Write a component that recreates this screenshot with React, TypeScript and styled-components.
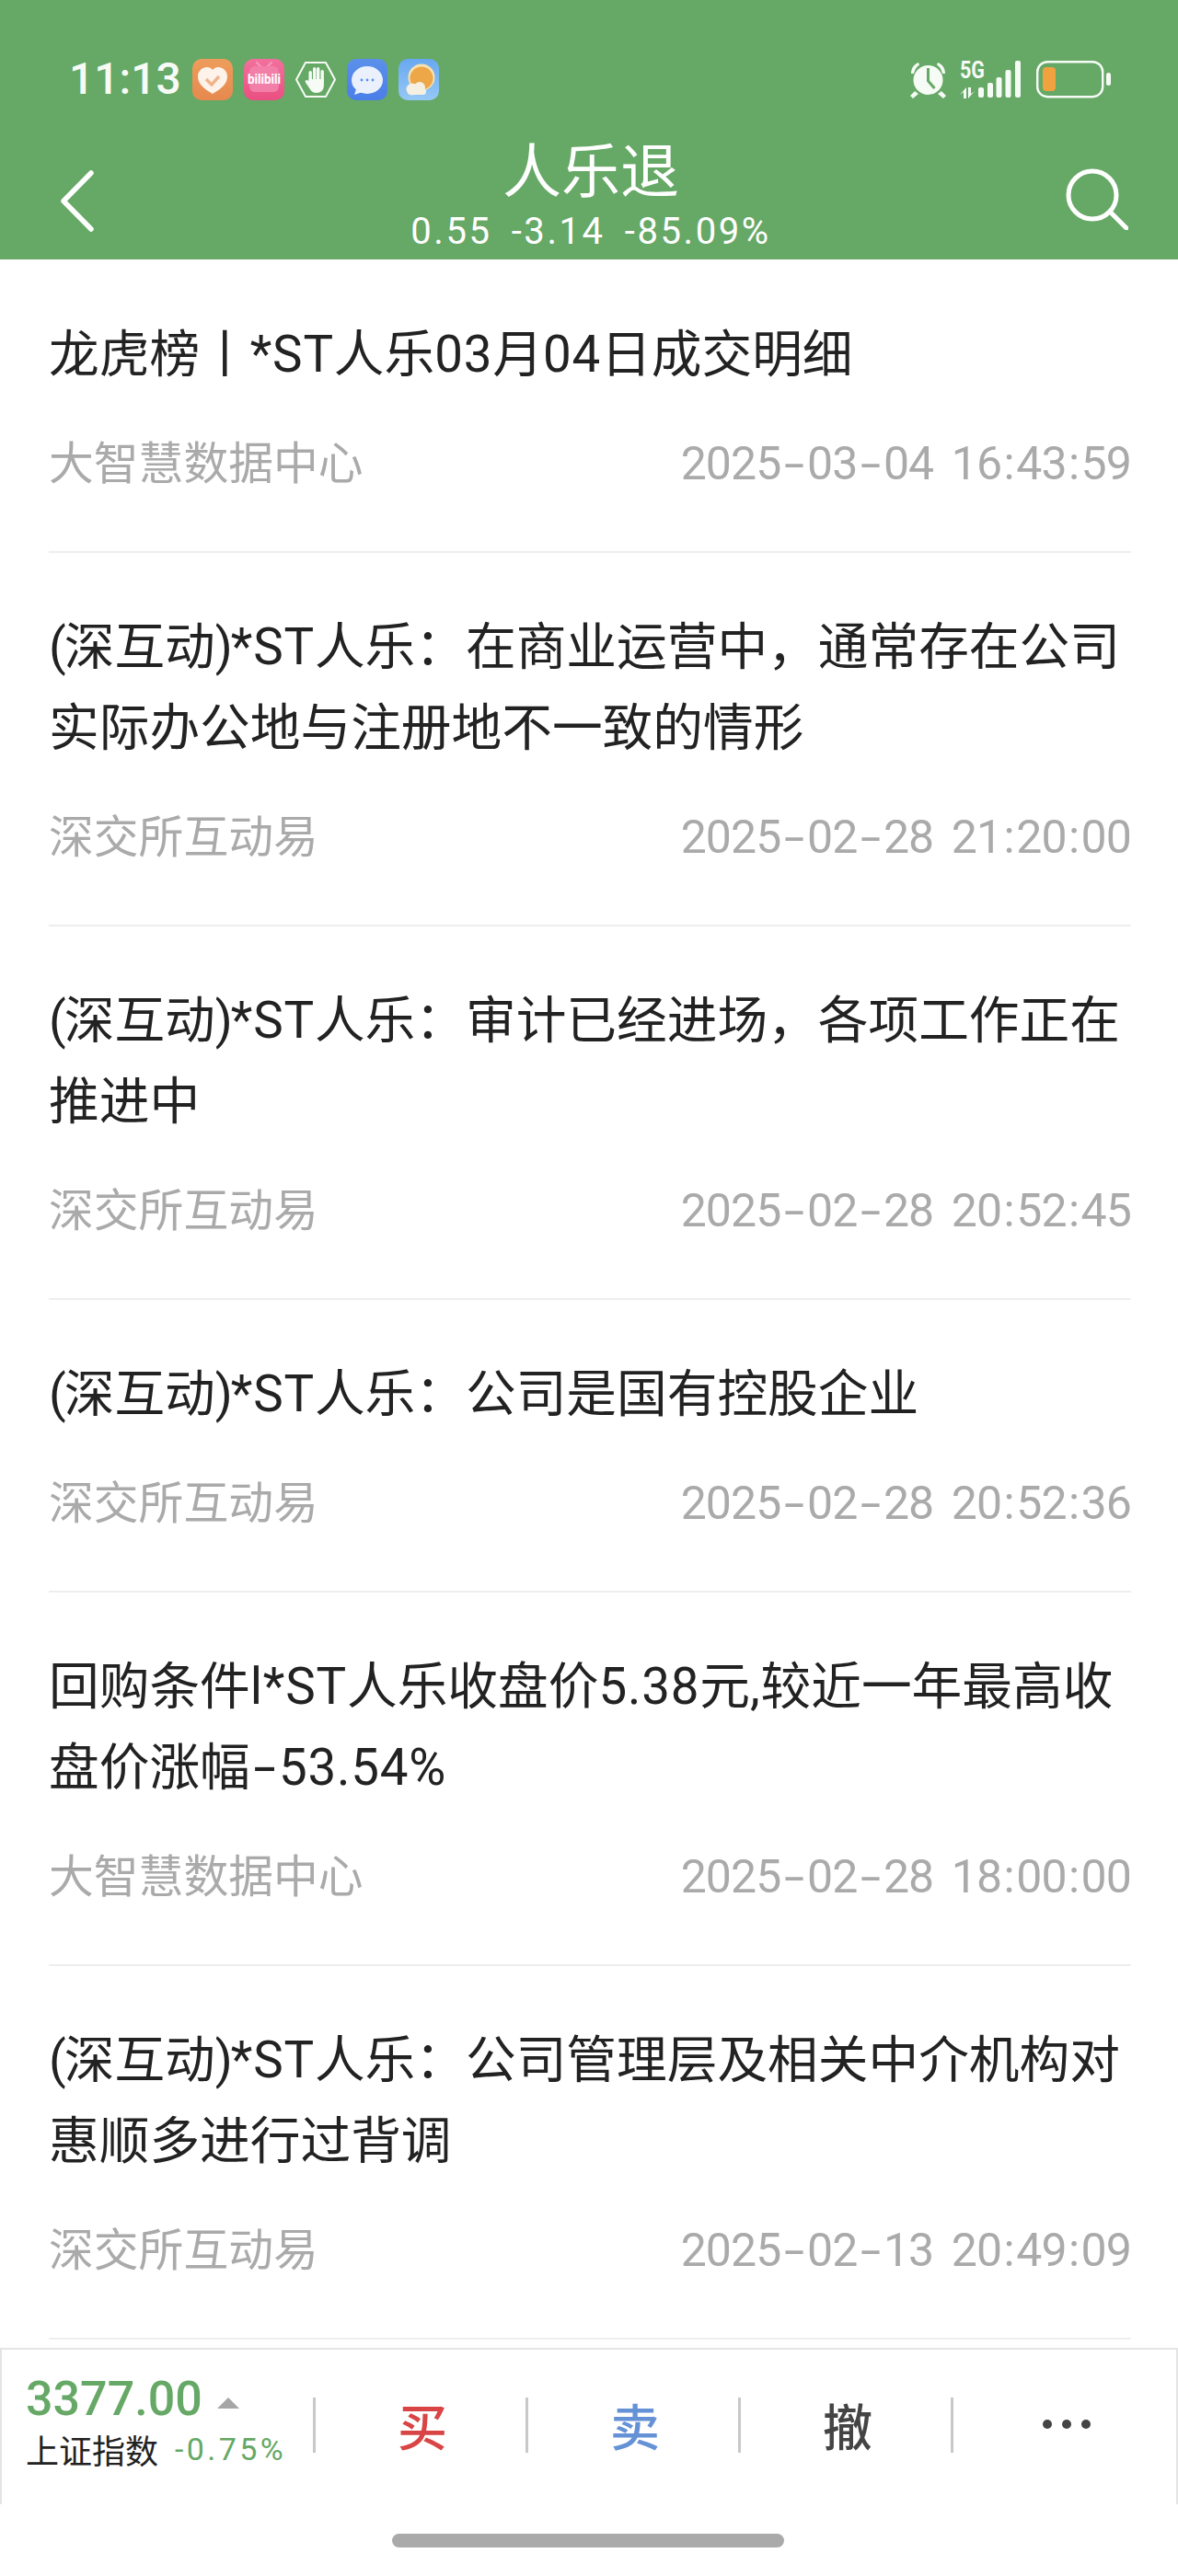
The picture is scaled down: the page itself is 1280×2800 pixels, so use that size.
import React from "react";
import styled, { createGlobalStyle } from "styled-components";

const GREEN = "#66a866";

const Global = createGlobalStyle`
  html, body { margin: 0; padding: 0; background: #fff; }
  body { font-family: Roboto, "Noto Sans CJK SC", sans-serif; }
`;

const Page = styled.div`
  position: relative;
  width: 1280px;
  height: 2800px;
  display: flex;
  flex-direction: column;
  overflow: hidden;
  background: #fff;
`;

const Header = styled.header`
  height: 282px;
  flex: none;
  background: ${GREEN};
  color: #fff;
  display: flex;
  flex-direction: column;
`;

const StatusBar = styled.div`
  height: 46px;
  margin-top: 63px;
  padding: 0 73px 0 75px;
  display: flex;
  align-items: center;
  justify-content: space-between;
`;

const StatusLeft = styled.div`
  display: flex;
  align-items: center;
  gap: 12px;
`;

const Clock = styled.span`
  font-size: 48px;
  line-height: 46px;
  font-weight: 500;
  margin-right: 0;
  color: #f6fbf6;
`;

const NavRow = styled.div`
  flex: 1;
  display: grid;
  grid-template-columns: 1fr auto 1fr;
  align-items: start;
  padding: 0 54px 0 58px;
`;

const BackIcon = styled.svg`
  display: block;
  margin: 76px 0 0 7px;
`;

const SearchIcon = styled.svg`
  display: block;
  margin: 74px 0 0 auto;
`;

const TitleBlock = styled.div`
  display: flex;
  flex-direction: column;
  align-items: center;
  margin-top: 37px;
`;

const Title = styled.div`
  font-size: 64px;
  line-height: 70px;
  font-family: "Noto Sans CJK SC", sans-serif;
`;

const Sub = styled.div`
  margin-top: 16px;
  font-size: 40px;
  line-height: 40px;
  letter-spacing: 2.6px;
  word-spacing: -2px;
  white-space: pre;
`;

const List = styled.div`
  flex: 1;
  padding-top: 1px;
`;

const Item = styled.div<{ $lines: number }>`
  height: ${(p) => (p.$lines === 2 ? 406 : 318)}px;
  box-sizing: border-box;
  margin: 0 51px 0 53px;
  padding-top: 58px;
  border-bottom: 2px solid #eeeeee;
`;

const ItemTitle = styled.div`
  font-size: 54.7px;
  line-height: 88px;
  color: #222;
  white-space: nowrap;
  font-family: Roboto, "Noto Sans CJK SC", sans-serif;
`;

const Latin = styled.span`
  letter-spacing: 0.8px;
`;

const Paren = styled.span`
  letter-spacing: -2px;
`;

const Hyphen = styled.span`
  display: inline-block;
  width: 0.57em;
  text-align: center;
  transform: scaleX(1.6);
`;

const Colon = styled.span`
  display: inline-block;
  width: 0.32em;
  text-align: center;
`;

const Meta = styled.div`
  display: flex;
  justify-content: space-between;
  align-items: center;
  margin-top: 37px;
  color: #aaa;
  line-height: 60px;
`;

const Source = styled.span`
  font-size: 48.8px;
  font-family: "Noto Sans CJK SC", sans-serif;
`;

const Time = styled.span`
  font-size: 50px;
  letter-spacing: -0.9px;
  word-spacing: 8px;
  padding-top: 8px;
  font-family: Roboto, sans-serif;
`;

const Footer = styled.footer`
  position: absolute;
  top: 2552px;
  left: 0;
  width: 1280px;
  height: 170px;
  box-sizing: border-box;
  border: 2px solid #e4e4e4;
  border-bottom: none;
  background: #fff;
  display: flex;
  align-items: flex-start;
`;

const Index = styled.div`
  width: 338px;
  flex: none;
  box-sizing: border-box;
  padding: 27px 0 0 26px;
`;

const IndexTop = styled.div`
  display: flex;
  align-items: center;
  gap: 16px;
  height: 52px;
`;

const IndexValue = styled.span`
  font-size: 52px;
  font-weight: 500;
  color: ${GREEN};
`;

const Tri = styled.span`
  width: 0;
  height: 0;
  border-left: 12px solid transparent;
  border-right: 12px solid transparent;
  border-bottom: 12px solid #a6a6a6;
  margin-top: 10px;
`;

const IndexBottom = styled.div`
  display: flex;
  align-items: center;
  gap: 18px;
  margin-top: 7px;
  line-height: 44px;
  white-space: nowrap;
`;

const IndexName = styled.span`
  font-size: 36px;
  color: #222;
  font-family: "Noto Sans CJK SC", sans-serif;
`;

const IndexPct = styled.span`
  font-size: 34px;
  letter-spacing: 3.4px;
  color: ${GREEN};
`;

const Action = styled.div<{ $color: string; $wide?: boolean }>`
  width: ${(p) => (p.$wide ? 245 : 231)}px;
  height: 60px;
  margin-top: 52px;
  padding: 0 0 2px 4px;
  flex: none;
  box-sizing: border-box;
  border-left: 3px solid #c8c8c8;
  display: flex;
  align-items: center;
  justify-content: center;
  font-size: 54px;
  font-weight: 500;
  font-family: "Noto Sans CJK SC", sans-serif;
  color: ${(p) => p.$color};
`;

const Dots = styled.div`
  display: flex;
  gap: 11px;
`;

const Dot = styled.span`
  width: 10px;
  height: 10px;
  border-radius: 50%;
  background: #444;
`;

const Pill = styled.div`
  position: absolute;
  left: 426px;
  top: 2754px;
  width: 426px;
  height: 15px;
  border-radius: 8px;
  background: #aaaaaa;
`;

const Icon = styled.svg`
  display: block;
  flex: none;
`;

const items = [
  { t: ["龙虎榜丨*ST人乐03月04日成交明细"], s: "大智慧数据中心", d: "2025-03-04 16:43:59" },
  { t: ["(深互动)*ST人乐：在商业运营中，通常存在公司", "实际办公地与注册地不一致的情形"], s: "深交所互动易", d: "2025-02-28 21:20:00" },
  { t: ["(深互动)*ST人乐：审计已经进场，各项工作正在", "推进中"], s: "深交所互动易", d: "2025-02-28 20:52:45" },
  { t: ["(深互动)*ST人乐：公司是国有控股企业"], s: "深交所互动易", d: "2025-02-28 20:52:36" },
  { t: ["回购条件l*ST人乐收盘价5.38元,较近一年最高收", "盘价涨幅-53.54%"], s: "大智慧数据中心", d: "2025-02-28 18:00:00" },
  { t: ["(深互动)*ST人乐：公司管理层及相关中介机构对", "惠顺多进行过背调"], s: "深交所互动易", d: "2025-02-13 20:49:09" },
];

const Mixed = ({ text }: { text: string }) => (
  <>
    {text.split(/([\x00-\x7f])/).map((part, i) => {
      if (part === "(" || part === ")") return <Paren key={i}>{part}</Paren>;
      if (part === "-") return <Hyphen key={i}>{part}</Hyphen>;
      if (/^[\x00-\x7f]$/.test(part)) return <Latin key={i}>{part}</Latin>;
      return part;
    })}
  </>
);

const Stamp = ({ text }: { text: string }) => (
  <>
    {text.split(/([-:])/).map((part, i) => {
      if (part === "-") return <Hyphen key={i}>{part}</Hyphen>;
      if (part === ":") return <Colon key={i}>{part}</Colon>;
      return part;
    })}
  </>
);

const AppTile = ({ from, to, children }: { from: string; to: string; children: React.ReactNode }) => (
  <Icon width="44" height="45" viewBox="0 0 44 45">
    <defs>
      <linearGradient id={from.slice(1) + to.slice(1)} x1="0" y1="0" x2="0" y2="1">
        <stop offset="0" stopColor={from} />
        <stop offset="1" stopColor={to} />
      </linearGradient>
    </defs>
    <rect width="44" height="45" rx="10" fill={`url(#${from.slice(1) + to.slice(1)})`} />
    {children}
  </Icon>
);

export default function App() {
  return (
    <Page>
      <Global />
      <Header>
        <StatusBar>
          <StatusLeft>
            <Clock>11:13</Clock>
            <AppTile from="#ee9d5c" to="#e6894f">
              <path d="M22 38C12 32 6 27 6 19c0-6 5-10 10-10 2.500 0 4.500 1 6 3 1.500-2 3.500-3 6-3 5 0 10 4 10 10 0 8-6 13-16 19z" fill="#fdf3ea" />
              <path d="M15 22l6 6 8-9" fill="none" stroke="#efb48a" strokeWidth="3.400" />
            </AppTile>
            <AppTile from="#f2709c" to="#ea4f82">
              <path d="M14 4l4 4M30 4l-4 4" stroke="#f598ba" strokeWidth="2.400" strokeLinecap="round" />
              <rect x="6" y="8" width="32" height="28" rx="6" fill="#f27fa8" />
              <text x="22" y="27" textAnchor="middle" fontFamily="Roboto, sans-serif" fontWeight="700" fontSize="14" fill="#fff" textLength="36" lengthAdjust="spacingAndGlyphs">bilibili</text>
            </AppTile>
            <Icon width="44" height="45" viewBox="0 0 44 45">
              <path d="M11 4h22l10 18.500L33 41H11L1 22.500z" fill="none" stroke="#f6fbf6" strokeWidth="2" strokeLinejoin="round" />
              <g fill="#f6fbf6">
                <rect x="14.500" y="13" width="3.400" height="14" rx="1.700" />
                <rect x="19" y="9" width="3.400" height="18" rx="1.700" />
                <rect x="23" y="9" width="3.400" height="18" rx="1.700" />
                <rect x="27.500" y="12" width="3.400" height="15" rx="1.700" />
                <path d="M14.500 22h16.400v7c0 5-3.500 8-8 8-3.500 0-5.500-1.500-7-4l-5-7.500c-1-1.800 1-3.200 2.500-2l1.100 1z" />
              </g>
            </Icon>
            <AppTile from="#5b90ea" to="#4b7ee8">
              <ellipse cx="22" cy="23" rx="17" ry="15" fill="#eaf1fd" />
              <path d="M10 33l-2 6 9-3z" fill="#eaf1fd" />
              <circle cx="16" cy="23" r="1.400" fill="#5b8fe8" />
              <circle cx="22" cy="23" r="1.400" fill="#5b8fe8" />
              <circle cx="28" cy="23" r="1.400" fill="#5b8fe8" />
            </AppTile>
            <AppTile from="#68a8f0" to="#96c8f6">
              <circle cx="25" cy="20" r="14.500" fill="#f8e2b0" />
              <circle cx="25" cy="21" r="12.500" fill="#eda648" />
              <circle cx="15" cy="33" r="6.500" fill="#f5f0e2" />
              <circle cx="23" cy="31" r="6" fill="#f5f0e2" />
              <rect x="10" y="32" width="20" height="7" rx="3.500" fill="#f5f0e2" />
            </AppTile>
          </StatusLeft>
          <Icon width="218" height="61" viewBox="989 56 218 61">
            <g fill="#f6fbf6">
              <circle cx="1008.500" cy="87" r="16" />
              <path d="M990 80c0-6 3-10 8-12l1 2.500c-3 2-5 5-6 9.500zM1027 80c0-6-3-10-8-12l-1 2.500c3 2 5 5 6 9.500zM994 99l-5 5 3 3 6-5zM1023 99l5 5-3 3-6-5z" />
              <text x="1043" y="85" fontFamily="Roboto, sans-serif" fontWeight="700" fontSize="25" textLength="27" lengthAdjust="spacingAndGlyphs">5G</text>
              <path d="M1050 95v12h-3v-7l-4 3zM1052 107V95h3v7l4-3z" />
              <rect x="1063" y="95" width="6" height="11" rx="2" />
              <rect x="1073" y="90" width="6" height="16" rx="2" />
              <rect x="1082.500" y="84" width="6" height="22" rx="2" />
              <rect x="1092.500" y="76" width="6" height="30" rx="2" />
              <rect x="1103" y="66" width="6" height="40" rx="2" />
              <rect x="1202" y="79" width="5" height="14" rx="2.500" />
            </g>
            <path d="M1008.500 74v14l7 8" fill="none" stroke={GREEN} strokeWidth="3" />
            <rect x="1127.200" y="67.200" width="71" height="38" rx="11" fill="none" stroke="#f6fbf6" strokeWidth="2.400" />
            <rect x="1133" y="73" width="14" height="26" rx="4" fill="#f0a23e" />
          </Icon>
        </StatusBar>
        <NavRow>
          <BackIcon width="37" height="67" viewBox="0 0 37 67">
            <path d="M34 3L4 33.500 34 64" fill="none" stroke="#fff" strokeWidth="5.500" strokeLinecap="round" strokeLinejoin="round" />
          </BackIcon>
          <TitleBlock>
            <Title>人乐退</Title>
            <Sub>0.55  -3.14  -85.09%</Sub>
          </TitleBlock>
          <SearchIcon width="68" height="67" viewBox="0 0 68 67">
            <circle cx="29" cy="29" r="26" fill="none" stroke="#fff" strokeWidth="5" />
            <path d="M50 49l16 16" stroke="#fff" strokeWidth="5" strokeLinecap="round" />
          </SearchIcon>
        </NavRow>
      </Header>
      <List>
        {items.map((it, i) => (
          <Item key={i} $lines={it.t.length}>
            {it.t.map((l) => (
              <ItemTitle key={l}>
                <Mixed text={l} />
              </ItemTitle>
            ))}
            <Meta>
              <Source>{it.s}</Source>
              <Time>
                <Stamp text={it.d} />
              </Time>
            </Meta>
          </Item>
        ))}
      </List>
      <Footer>
        <Index>
          <IndexTop>
            <IndexValue>3377.00</IndexValue>
            <Tri />
          </IndexTop>
          <IndexBottom>
            <IndexName>上证指数</IndexName>
            <IndexPct>-0.75%</IndexPct>
          </IndexBottom>
        </Index>
        <Action $color="#d94444">买</Action>
        <Action $color="#6592d6">卖</Action>
        <Action $color="#444">撤</Action>
        <Action $color="#444" $wide>
          <Dots>
            <Dot />
            <Dot />
            <Dot />
          </Dots>
        </Action>
      </Footer>
      <Pill />
    </Page>
  );
}
